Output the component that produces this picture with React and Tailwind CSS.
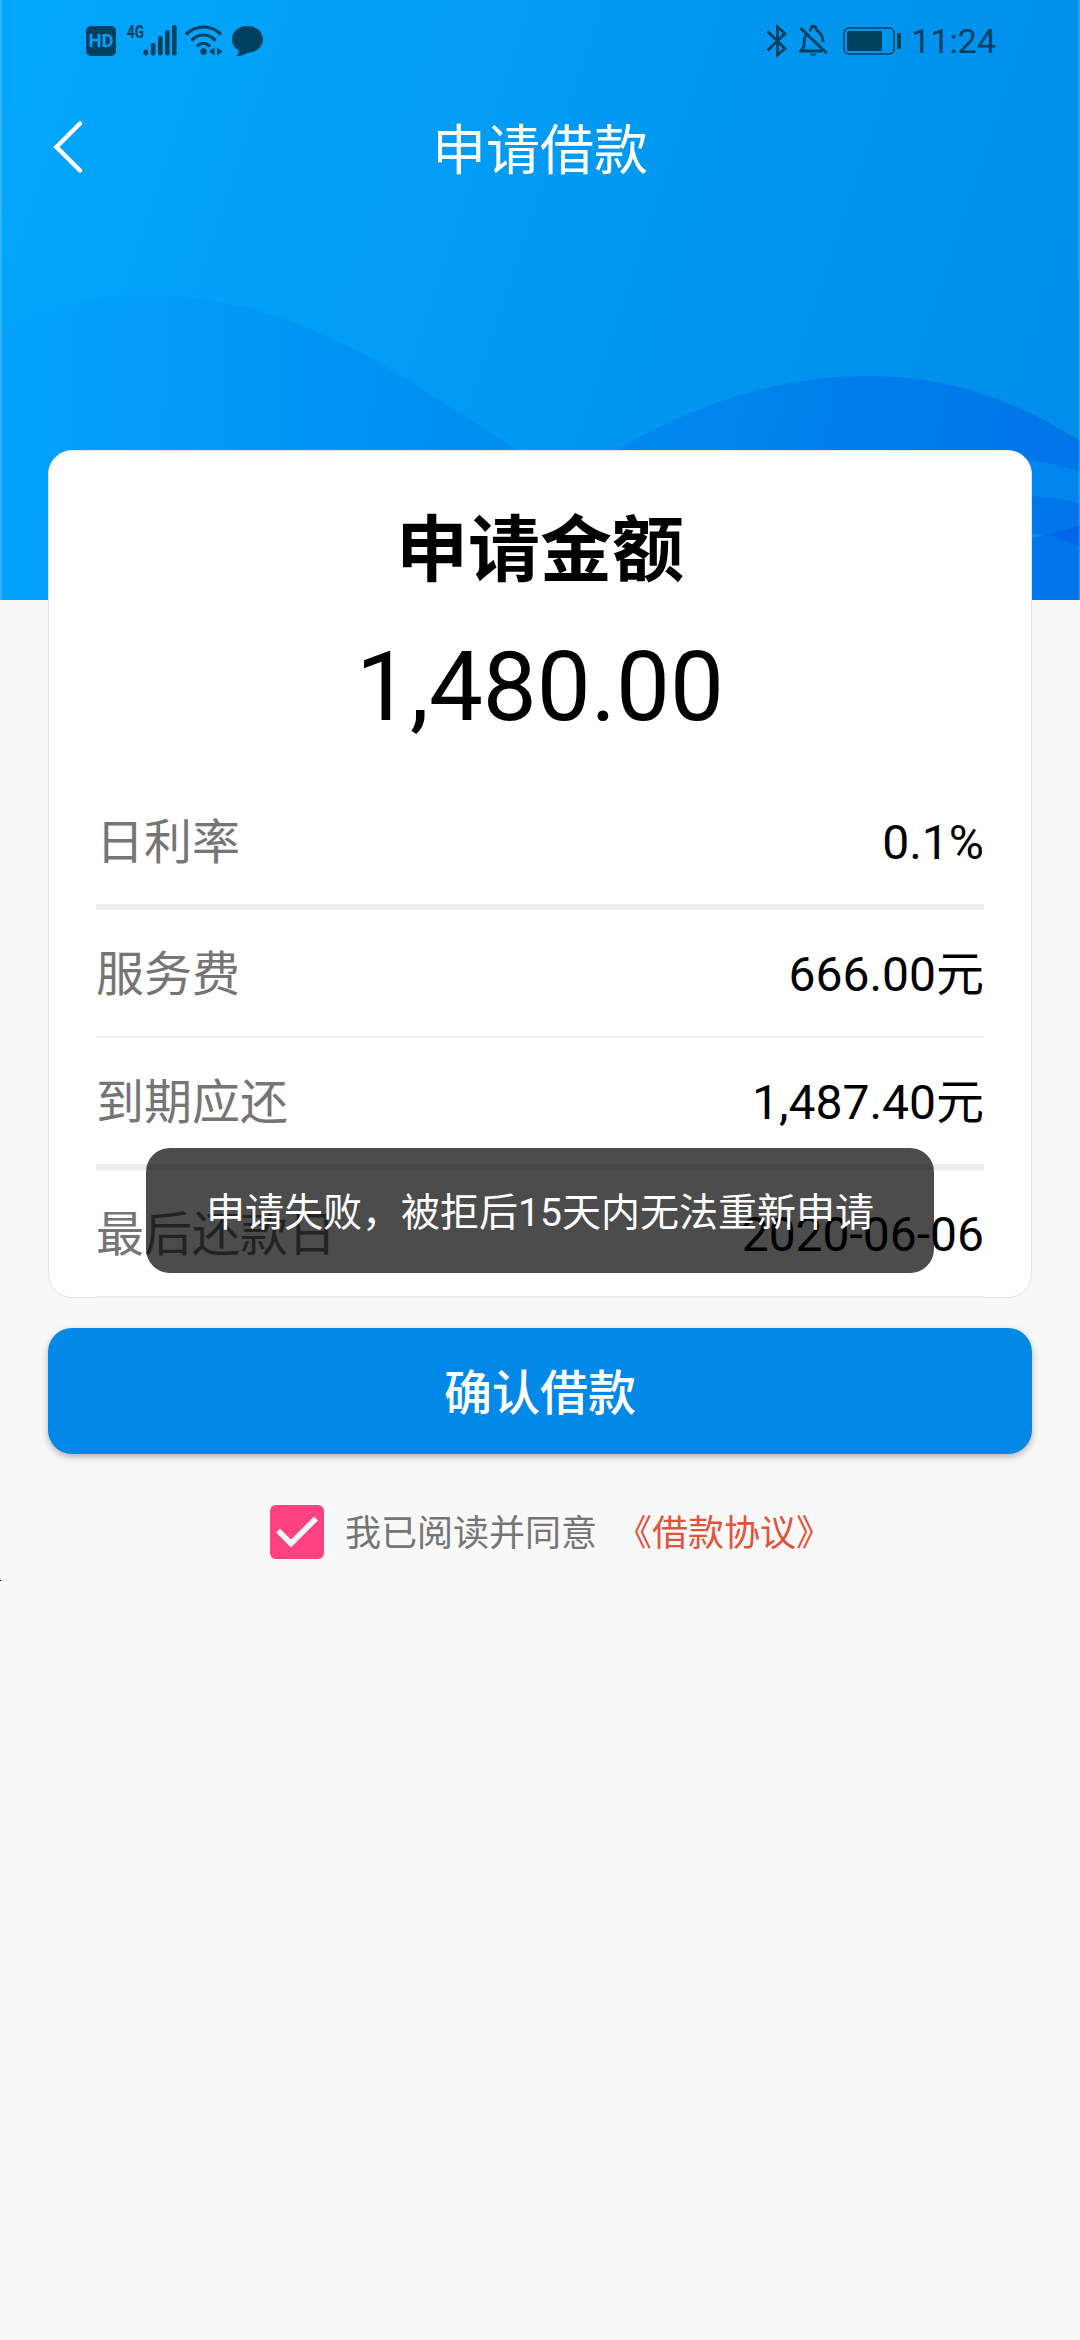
const dark = "#00405f";

function HdBadge() {
  return (
    <span className="flex h-[30px] w-[30px] items-center justify-center rounded-[5px] bg-[#00405f] font-['Roboto',sans-serif] text-[18.5px] font-bold leading-none text-[#049ff8]">
      HD
    </span>
  );
}

function Signal() {
  return (
    <svg className="h-[46px] w-[52px]" viewBox="0 -6 52 46">
      <text x="0" y="14" fontFamily="Roboto, sans-serif" fontWeight="700" fontSize="18.5" textLength="17" lengthAdjust="spacingAndGlyphs" fill={dark}>
        4G
      </text>
      <g fill={dark}>
        <rect x="16.500" y="25.500" width="4.600" height="6" rx="2" />
        <rect x="23.800" y="19" width="4.600" height="12.500" rx="2" />
        <rect x="31" y="12" width="4.600" height="19.500" rx="2" />
        <rect x="38" y="6" width="4.600" height="25.500" rx="2" />
        <rect x="45" y="1" width="4.600" height="30.500" rx="2" />
      </g>
    </svg>
  );
}

function Wifi() {
  return (
    <svg className="h-[34px] w-[38px]" viewBox="0 0 38 34" fill="none" stroke={dark} strokeWidth="3.2" strokeLinecap="round">
      <path d="M2 9.5C11.500 .800 26 .800 35 9.500" />
      <path d="M7.500 15.500c6.400-6 15.700-6 22 0" />
      <path d="M13 21.500c3.400-3 7.700-3 11 0" />
      <circle cx="18.500" cy="27.500" r="3.200" fill={dark} stroke="none" />
      <path d="M24 27.500l5.500-4v8zM37.500 27.500l-5.500-4v8z" fill={dark} stroke="none" />
    </svg>
  );
}

function Bubble() {
  return (
    <svg className="h-[32px] w-[33px]" viewBox="0 0 33 32" fill={dark}>
      <path d="M16.500 1C25.500 1 32 6.800 32 14.300S25.500 27.500 16.500 27.800C14 29.500 10 31.200 5.500 31c1.700-1.600 2.400-3.400 2.300-5.600C3.600 23 1 19 1 14.300 1 6.800 7.500 1 16.500 1z" />
    </svg>
  );
}

function Bluetooth() {
  return (
    <svg className="h-[34px] w-[22px]" viewBox="0 0 22 34" fill="none" stroke={dark} strokeWidth="2.800">
      <path d="M1.500 7.500L19 24.500L11.500 31V3L19 9.500L1.500 26.500" />
    </svg>
  );
}

function BellOff() {
  return (
    <svg className="h-[34px] w-[30px]" viewBox="0 0 30 34" fill="none" stroke={dark} strokeWidth="2.800">
      <path d="M1.500 4L27.500 29" strokeWidth="3" />
      <path d="M6.500 11.500C5 14.500 5 18 5 22.500L2 27H23" />
      <path d="M10.500 7C11.500 6 12 5.500 12 4.500c0-3 5-3 5 0 0 1.500 1 2 2.500 3C23 10.500 24 14 24 18" />
      <path d="M11 29.800h6.500c-.5 3-6 3-6.500 0z" fill={dark} stroke="none" />
    </svg>
  );
}

function Battery() {
  return (
    <svg className="h-[28px] w-[59px]" viewBox="0 0 59 28" fill="none">
      <rect x="1" y="1" width="50" height="26" rx="5" stroke={dark} strokeWidth="1.500" />
      <rect x="4" y="4" width="35" height="20" rx="2" fill={dark} />
      <rect x="54" y="6" width="4" height="16" rx="1.500" fill={dark} />
    </svg>
  );
}

function StatusBar() {
  return (
    <div className="flex h-[82px] items-center pl-[86px] pr-[84px]">
      <HdBadge />
      <div className="ml-[11px] flex items-center">
        <Signal />
        <div className="ml-[6px] flex"><Wifi /></div>
        <div className="ml-[8px] flex"><Bubble /></div>
      </div>
      <div className="ml-auto flex items-center">
        <Bluetooth />
        <div className="ml-[11px] flex"><BellOff /></div>
        <div className="ml-[14px] flex"><Battery /></div>
        <span className="ml-[9px] font-['Roboto',sans-serif] text-[34px] leading-[40px] text-[#00405f]">11:24</span>
      </div>
    </div>
  );
}

function HeaderArt() {
  return (
    <svg className="absolute inset-0 h-full w-full" viewBox="0 0 1080 600" preserveAspectRatio="none">
      <defs>
        <linearGradient id="sky" gradientUnits="userSpaceOnUse" x1="0" y1="120" x2="1080" y2="480">
          <stop offset="0" stopColor="#02a6fb" />
          <stop offset="1" stopColor="#008de9" />
        </linearGradient>
        <linearGradient id="leftHill" gradientUnits="userSpaceOnUse" x1="20" y1="420" x2="480" y2="440">
          <stop offset="0" stopColor="#02a2fa" />
          <stop offset="1" stopColor="#008ef1" />
        </linearGradient>
        <linearGradient id="rightHill" gradientUnits="userSpaceOnUse" x1="620" y1="440" x2="1040" y2="480">
          <stop offset="0" stopColor="#0089ee" />
          <stop offset="1" stopColor="#0076ea" />
        </linearGradient>
      </defs>
      <rect width="1080" height="600" fill="url(#sky)" />
      <path d="M0 332C45 305 95 295 148 295C300 295 410 382 517 450L700 600H0z" fill="url(#leftHill)" />
      <path d="M616 450C700 402 780 376 868 376C950 376 1020 402 1080 441V600H500z" fill="url(#rightHill)" />
      <path d="M1000 456Q1045 460 1080 471V503Q1050 496 1000 494z" fill="#0084ee" />
      <path d="M1030 533L1044 536L1030 538z" fill="#0090f0" />
      <path d="M1047 535.500Q1065 530 1080 525V546Q1065 540 1047 535.500z" fill="#0067e9" />
      <path d="M0 0H2V600H0zM1078.500 0H1080V600H1078.500z" fill="#fff" fillOpacity=".18" />
    </svg>
  );
}

const rows = [
  { label: "日利率", value: "0.1%", line: "h-[6px]" },
  { label: "服务费", value: "666.00元", line: "h-[2px]" },
  { label: "到期应还", value: "1,487.40元", line: "h-[6px]" },
  { label: "最后还款日", value: "2020-06-06", line: "h-[2px]" },
];

export default function App() {
  return (
    <div className="relative h-[2340px] w-[1080px] overflow-hidden bg-[#f8f8f8] font-['Roboto','Noto_Sans_CJK_SC',sans-serif]">
      <header className="relative h-[600px]">
        <HeaderArt />
        <div className="relative">
          <StatusBar />
          <div className="flex h-[130px] items-center">
            <svg className="ml-[50px] h-[56px] w-[36px]" viewBox="0 0 36 56" fill="none" stroke="#fff" strokeWidth="4.500" strokeLinecap="round">
              <path d="M30 4.500L6.500 28L30 51.500" />
            </svg>
            <h1 className="mr-[86px] flex-1 pt-[10px] text-center text-[54px] leading-[64px] text-white">申请借款</h1>
          </div>
        </div>
      </header>

      <main className="relative -mt-[150px] px-[48px]">
        <section className="relative h-[848px] rounded-[24px] border border-[#e4e4e4] bg-white px-[47px]">
          <h2 className="mt-[47px] text-center text-[72px] font-bold leading-[106px] text-black">申请金额</h2>
          <div className="mt-[27px] text-center text-[96px] leading-[112px] text-black">1,480.00</div>
          <div className="mt-[35px]">
            {rows.map((r) => (
              <div key={r.label}>
                <div className="flex h-[126px] items-center justify-between pt-[4px] text-[48px] leading-[70px]">
                  <span className="text-[#757575]">{r.label}</span>
                  <span className="text-black">{r.value}</span>
                </div>
                <div className={`${r.line} bg-[#ededed]`} />
              </div>
            ))}
          </div>
          <div className="absolute left-[97px] top-[697px] flex h-[125px] w-[788px] items-center justify-center rounded-[24px] bg-black/70 pt-[4px]">
            <span className="whitespace-nowrap text-[39px] leading-[56px] text-white">申请失败，被拒后15天内无法重新申请</span>
          </div>
        </section>

        <button className="mt-[30px] flex h-[126px] w-full items-center justify-center rounded-[24px] bg-[#0288e7] pt-[5px] text-[48px] font-medium leading-[70px] text-white shadow-[0_3px_7px_rgba(0,0,0,0.28)]">
          确认借款
        </button>

        <div className="mt-[51px] flex h-[54px] items-center pl-[222px] text-[36px] leading-[54px]">
          <span className="flex h-[54px] w-[54px] rounded-[6px] bg-[#ff4081]">
            <svg className="h-[54px] w-[54px]" viewBox="0 0 54 54" fill="none" stroke="#f8f8f8" strokeWidth="5.500">
              <path d="M8 25.500L21 38.500L46 13.500" />
            </svg>
          </span>
          <span className="ml-[21px] pt-[4px] text-[#757575]">我已阅读并同意</span>
          <span className="ml-[19px] pt-[4px] text-[#e2533a]">《借款协议》</span>
        </div>
      </main>
      <div className="mt-[21px] h-px w-px bg-black" />
    </div>
  );
}
